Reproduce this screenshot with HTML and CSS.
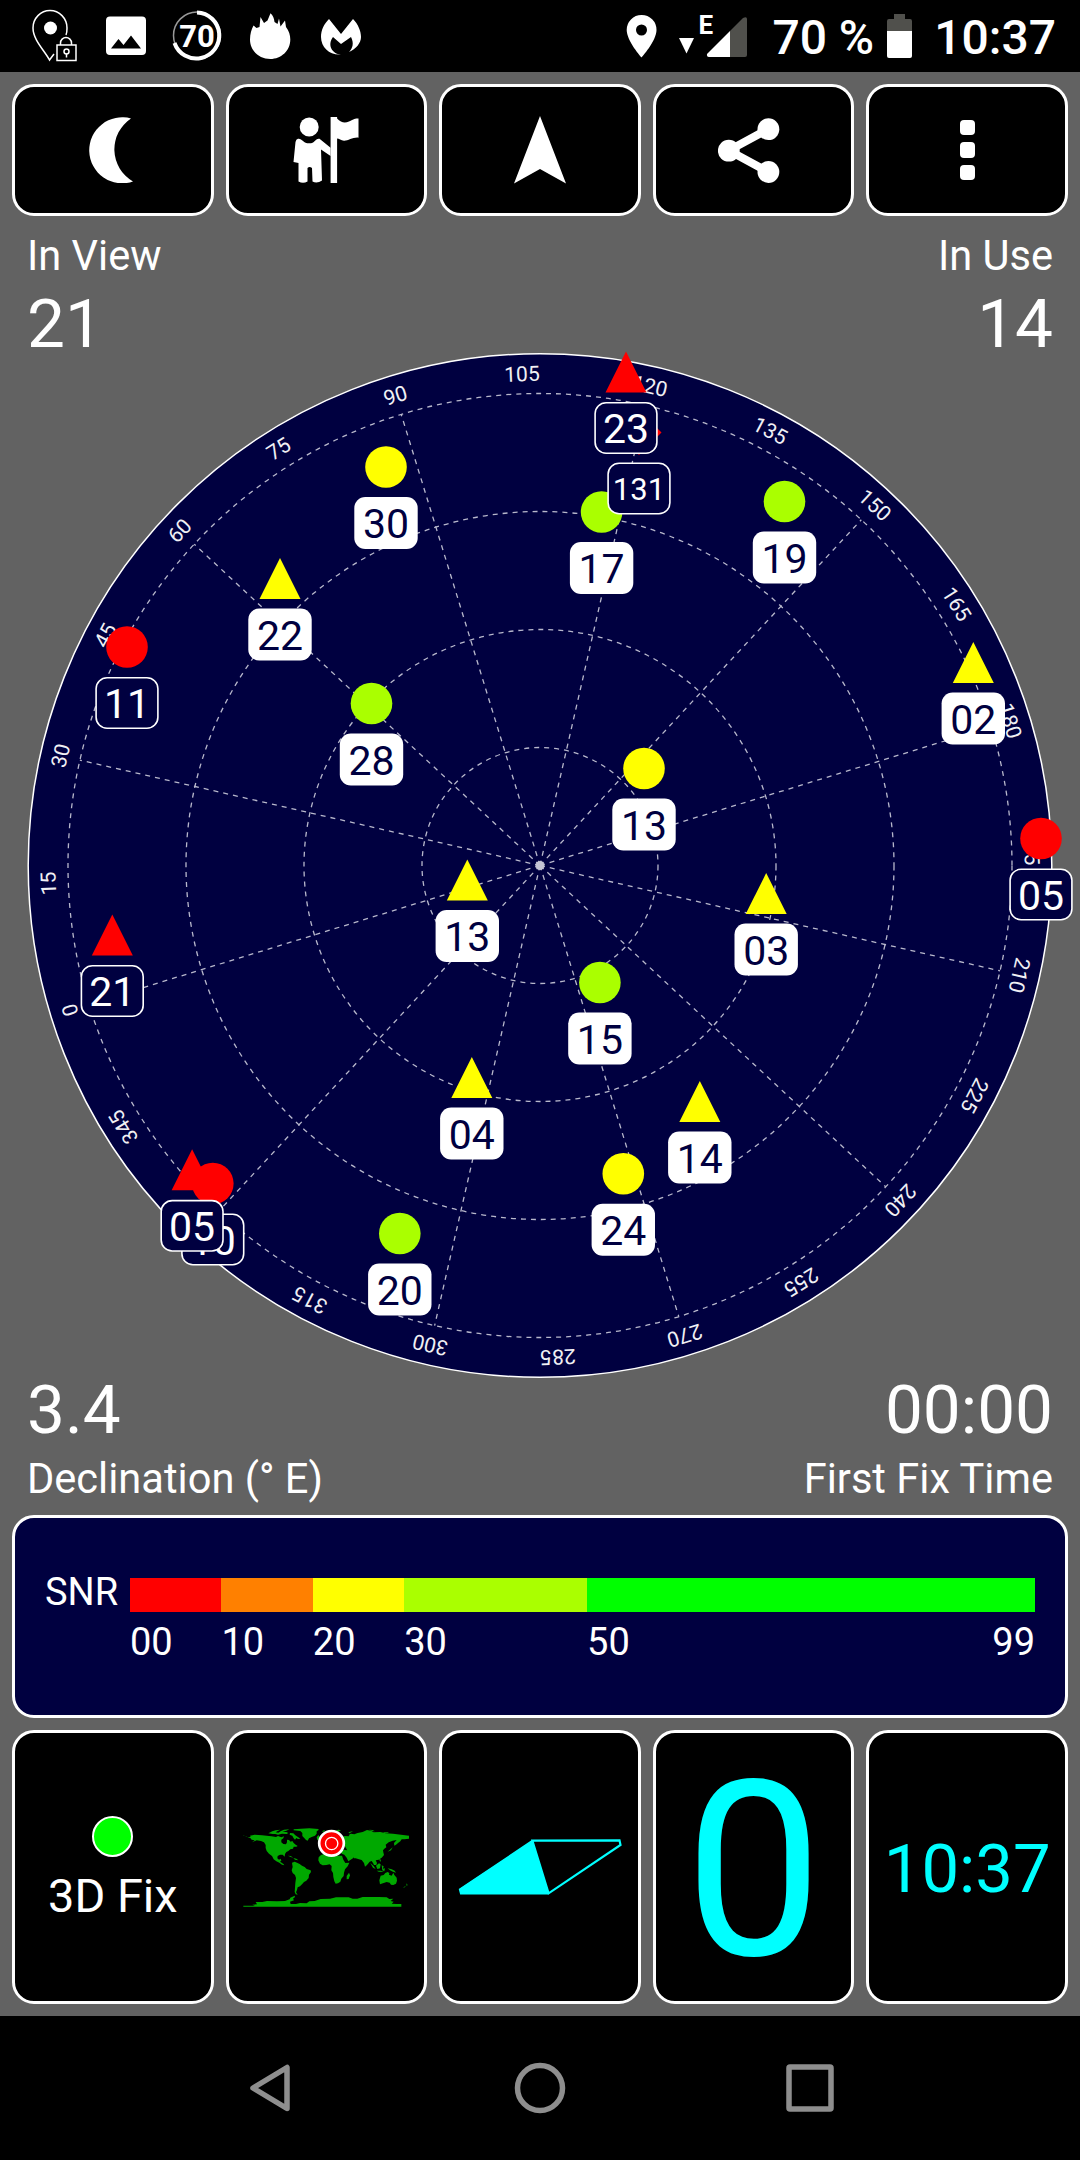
FILE: index.html
```
<!DOCTYPE html>
<html lang="en">
<head>
    <meta charset="UTF-8">
    <meta name="viewport" content="width=device-width, initial-scale=1.0">
    <title>GPS Status</title>
    <link rel="stylesheet" href="styles.css">
</head>
<body>
    <!-- Status bar -->
    <div class="status-bar">
        <div class="status-left">
            <svg class="status-icon" width="48" height="72" viewBox="31 0 48 72">
                <g fill="none" stroke="#fff" stroke-width="1.5">
                    <path d="M66 35C67 33 67 31 67 28A17 17.500 0 0 0 33 28C33 40 45 51 49.500 60L54 54"/>
                    <rect x="57" y="45" width="19" height="15.500"/>
                    <path d="M60.500 45v-2a5.500 5.500 0 0 1 11 0v2M66.500 53.500v4"/>
                    <circle cx="66.500" cy="51.500" r="2.500"/>
                </g>
                <circle cx="50.500" cy="28" r="6.500" fill="#fff"/>
            </svg>
            <svg class="status-icon" width="40" height="72" viewBox="106 0 40 72">
                <path fill="#fff" fill-rule="evenodd" d="M110 16.500h32a4 4 0 0 1 4 4V51a4 4 0 0 1-4 4h-32a4 4 0 0 1-4-4V20.500a4 4 0 0 1 4-4zM111 48.500h30L131 35.500l-7.500 9.500-5-6z"/>
            </svg>
            <svg class="status-icon" width="50" height="72" viewBox="173 0 50 72">
                <circle cx="198" cy="35.500" r="23.500" fill="none" stroke="#999" stroke-width="1.500"/>
                <path d="M198 12.500A23 23 0 1 1 175.500 43" fill="none" stroke="#fff" stroke-width="4"/>
                <text class="ring-text" x="198" y="46.500">70</text>
            </svg>
            <svg class="status-icon" width="42" height="72" viewBox="249 0 42 72">
                <path fill="#fff" d="M270.300 59C259 59 250 50.500 250 39.500C250 34 251.500 29 253.500 25.500L256.500 28L259.500 27L260.500 17L264 23L267.500 20.500L270.500 13.300C273 15.500 274 18 274.500 22L277.500 24L279 18.500L280.500 26.500L285 20.500L286 27C289 31 290.300 35 290.300 39.500C290.300 50.500 281.500 59 270.300 59z"/>
            </svg>
            <svg class="status-icon last" width="40" height="72" viewBox="322 0 40 72">
                <path fill="#fff" d="M330 19l12 15 12-15c5 5 8 12 8 18 0 6-5 12-12 15 4-4 5-9 2-15l-10 7-8-7c-6 8-1 17 8 17.500-11 1-20-7-20-17.500 0-7 3-13 8-18z"/>
            </svg>
        </div>
        <div class="status-right">
            <svg width="32" height="72" viewBox="626 0 32 72">
                <path fill="#fff" fill-rule="evenodd" d="M641.500 15A14.800 14.800 0 0 0 626.700 30C626.700 41 641.500 57.500 641.500 57.500S656.500 41 656.500 30A14.800 14.800 0 0 0 641.500 15zM641.500 24.500a5.500 5.500 0 1 1 0 11 5.500 5.500 0 0 1 0-11z"/>
            </svg>
            <svg class="signal" width="70" height="72" viewBox="678 0 70 72">
                <path d="M679 38h15l-7.500 15.500z" fill="#fff"/>
                <path d="M730 31l13-13q4-2 4 1v36q0 2-2 2h-15z" fill="#50504c"/>
                <path d="M730 31v26h-21q-2.500 0-2-3z" fill="#fff"/>
                <text class="network-text" x="698.500" y="33.500">E</text>
            </svg>
            <span class="battery-text">70 %</span>
            <svg class="battery" width="26" height="72" viewBox="887 0 26 72">
                <path d="M894 14h11v5h5q2 0 2 2v10h-25V21q0-2 2-2h5z" fill="#50504c"/>
                <path d="M887 31h25v25q0 2-2 2h-21q-2 0-2-2z" fill="#fff"/>
            </svg>
            <span class="clock">10:37</span>
        </div>
    </div>

    <div class="app">
        <!-- Toolbar -->
        <div class="toolbar">
            <div class="tool-btn">
                <svg width="66" height="66"><path d="M51 1.500A33 33 0 1 0 53 64.500A37 37 0 0 1 51 1.500z"/></svg>
            </div>
            <div class="tool-btn">
                <svg width="66" height="66">
                    <circle cx="16.200" cy="10" r="9.500"/>
                    <rect x="37.600" y="0" width="6.500" height="66"/>
                    <path d="M44 1.500C48 5 51 7 56 4.500S62 1.500 65.500 1.500V20.700C60 20 55 24 51 23.800 48 23.600 46 21.500 44 21.500z"/>
                    <path d="M5 21.700C9 21 10 26.300 16.200 26.300S22 21 26.500 21.700L37.600 30.700V39L28 32.500 29 63.500Q24 67 19.500 64.500L19 51Q16.500 49 14.500 51V64.500Q10 67 5.500 64.500V46L0.500 45 2.500 25Q3 22 5 21.700z"/>
                </svg>
            </div>
            <div class="tool-btn">
                <svg width="52" height="68"><path d="M26 0L52 67.500L26 53L0 67.500z"/></svg>
            </div>
            <div class="tool-btn">
                <svg class="share-icon" width="72" height="72">
                    <path d="M50.400 15L10.800 36.500L50.400 58" fill="none" stroke="#fff" stroke-width="8"/>
                    <circle cx="50.400" cy="15.200" r="10.900"/>
                    <circle cx="10.800" cy="36.700" r="10.900"/>
                    <circle cx="50.400" cy="58" r="10.900"/>
                </svg>
            </div>
            <div class="tool-btn">
                <div class="dots"><i></i><i></i><i></i></div>
            </div>
        </div>

        <!-- Sky view -->
        <div class="sky">
            <div class="readouts">
                <div class="readout-row">
                    <div>
                        <div class="label">In View</div>
                        <div class="value">21</div>
                    </div>
                    <div class="right">
                        <div class="label">In Use</div>
                        <div class="value">14</div>
                    </div>
                </div>
                <div class="readout-row">
                    <div>
                        <div class="value">3.4</div>
                        <div class="label">Declination (° E)</div>
                    </div>
                    <div class="right">
                        <div class="value">00:00</div>
                        <div class="label">First Fix Time</div>
                    </div>
                </div>
            </div>
            <svg class="radar" id="radar" viewBox="-540 -649.5 1080 1299">
                <circle class="disc" r="511.800"/>
                <g id="grid"></g>
                <circle class="center-dot" r="4.500"/>
                <g id="degrees"></g>
                <g id="satellites"></g>
            </svg>
        </div>

        <!-- Signal legend -->
        <div class="snr-panel">
            <div class="snr-title">SNR</div>
            <div class="snr-scale">
                <div class="snr-step red"><div class="bar"></div><span>00</span></div>
                <div class="snr-step orange"><div class="bar"></div><span>10</span></div>
                <div class="snr-step yellow"><div class="bar"></div><span>20</span></div>
                <div class="snr-step lime"><div class="bar"></div><span>30</span></div>
                <div class="snr-step green"><div class="bar"></div><span>50</span><span>99</span></div>
            </div>
        </div>

        <!-- Bottom cards -->
        <div class="cards">
            <div class="card fix-card">
                <div class="fix-dot"></div>
                <div class="fix-text">3D Fix</div>
            </div>
            <div class="card map-card">
                <svg width="167" height="81" viewBox="24 38 501 243">
                    <g fill="#00a800">
                        <!-- americas -->
                        <path d="M25 62h8l2 3h12l-2-4 14-3 22 2 28 3 14 2 6-3 10 4 8-3-2 6-6 4 0 8 6 5 8 1 3-6 0-8 6 1 5 5 5-2 4 6 6 5 6 4-4 2-8 0-2 6-8 2-6 5-6 3-4 6-1 8-6-6-8 0-7 4-1 7 5 4 5-3 2 6-4 3 6 4 5 4 2 3-7-2-8-6-9-4-8-6-5-10-9-7-7-8-3-9 0-9-5-8-9-4-13-2-14 6 8-6-9-2-4-5-7-2-8-4-10-1z"/>
                        <path d="M100 54l12-6 10-3 14-2-8 4-6 4 8 1 8-5 9-4 16-1-9 4-12 4 12 0 6 3-5 3-14-1-12 3-8-2-8 0z"/>
                        <path d="M165 53l10 1 6 6 9 6 6 4-7 1-5-3-4 5-4-4-4-8-8-3z"/>
                        <path d="M176 42l22-2 25-1 27 2 1 3-6 4 0 7-5 6-10 4-8 4-4 7-5-2-6-7-5-5 0-9-6-6-20-2z"/>
                        <path d="M159 121l8 1 8 5-8-2zM175 128l9 2 6 5-10-2z"/>
                        <path d="M171 142l8-3 7 3 8 4 7 5 8 4 6 6 12 4 1 5-6 8-1 10-7 8-7 4-6 7-6 6-7 3-2 8-3 7 5 7-6-1-3-7 1-13 1-14 2-15-3-9-7-6-3-8 3-10z"/>
                        <!-- africa and eurasia -->
                        <path d="M258 119l12-4 30 1 8 5 13 0 4 12 6 10 12-1-5 11-8 9-3 10-1 10-7 8-3 9-7 5-7 1-4-7-3-13-1-12-5-8 1-13-6-5-10 2-11 1-8-5-5-10 1-9z"/>
                        <path d="M317 69l12-7 12 1 3-6 4-2 10 2 10-4 15-3 13-6 12 2 8 5 20-1 16 4 22 1 24 3 24 3 0 9-14 2-8 0-4 6-6 4-7 6-5 3-1-8 8-9-12 2-12 5-9 7 2 8-6 4-4 5 1 6 2 8-7 8-9 6-9 2 4 8-2 6-7 0-3-6-4-6-6 2-8 10-6 5-3-11-7-9-8-2-10-3-5 0-3-6-8-1z"/>
                        <path d="M317 108l9-5 11 2 3-9 8 1 0 12 4 7 7 4-4 8-8 5-7 5-5-11-7-9-8-3z"/>
                        <path d="M342 172l3 8-4 11-6 1 0-10z"/>
                        <path d="M245 66l5-7 3 4-2 10-4 2zM260 48l10-4-3 5zM303 45l8-2 7 2-8 4zM340 51l14-4-10 7z"/>
                        <path d="M402 43l10 1 8 4-8-1zM444 50l14 0 4 2-14 0z"/>
                        <!-- islands and oceania -->
                        <path d="M406 143l10 9 6 9-8-4zM423 151l9-7 5 3-2 12-8 2zM440 150l6 3-2 7 6-1-2 9-6-3zM425 166l12 0 10 4-16-1zM458 159l12 3 9 4 4 6-9-3-9-4zM432 131l6 2-2 7zM468 100l5-4-5 9-10 4z"/>
                        <path d="M437 181l9-2 5-6 7-3 5 3-1 5 8 3 5-9 3 7 7 8 1 9-3 9-8 4-7-1-4-6-9-2-9 3-11 4-2-12z"/>
                        <path d="M514 204l4 5-3 3zM513 211l-4 5-5 2 4-4z"/>
                        <!-- antarctica -->
                        <path d="M25 271h35l-8-3 14-1-4-7 20 0 14-3 30 1 24-1 14-5 2-5 13-6 1 4-6 5 3 5-12 4 2 7 16 0 12-3 20 1 8-6 16-1 18-6 28-1 18-4 38 0 12 4 14 0 16-5 48 0 24 1 8 5 12-1-8 7 9 2-6 6 14 1h15v8H25z"/>
                    </g>
                    <circle cx="289.500" cy="84" r="37" fill="#f00" stroke="#fff" stroke-width="8"/>
                    <circle cx="290" cy="84.500" r="18.500" fill="#f00" stroke="#fff" stroke-width="4"/>
                </svg>
            </div>
            <div class="card">
                <svg width="166" height="60" viewBox="457 1837 166 60">
                    <path d="M532.400 1840.500L459.500 1889L461 1894L548.600 1893.300z" fill="#0ff"/>
                    <path d="M532.400 1840.700L548.600 1893.300L620.500 1845L619.500 1840.300zM532.400 1841L460 1889.500L461 1893.500L548.600 1893.300" fill="none" stroke="#0ff" stroke-width="2.200"/>
                </svg>
            </div>
            <div class="card speed">0</div>
            <div class="card time">10:37</div>
        </div>
    </div>

    <!-- Navigation bar -->
    <div class="nav-bar">
        <svg width="48" height="52"><path d="M7 26L41 5.500V46.500z"/></svg>
        <svg width="56" height="56"><circle cx="28" cy="28" r="22.500"/></svg>
        <svg width="48" height="48"><rect x="3" y="3" width="42" height="42" rx="1"/></svg>
    </div>

    <script src="script.js"></script>
</body>
</html>
```
FILE: styles.css
```
* {
    box-sizing: border-box;
}
body {
    width: 1080px;
    height: 2160px;
    margin: 0;
    background-color: #000;
    color: #fff;
    font-family: Roboto, "Liberation Sans", sans-serif;
    overflow: hidden;
}
svg {
    display: block;
}

/* Status bar */
.status-bar {
    height: 72px;
    display: flex;
    justify-content: space-between;
    padding: 0 24px 0 31px;
    background-color: #000;
}
.status-left,
.status-right {
    display: flex;
}
.status-left {
    gap: 26.5px;
}
.status-icon.last {
    margin-left: 4px;
}
.ring-text {
    font-size: 31px;
    font-weight: 700;
    fill: #fff;
    text-anchor: middle;
}
.network-text {
    font-size: 26px;
    font-weight: 700;
    fill: #fff;
}
.signal {
    margin-left: 20px;
}
.battery {
    margin: 0 21px 0 13px;
}
.battery-text,
.clock {
    font-size: 48px;
    font-weight: 500;
    line-height: 75px;
}
.battery-text {
    margin-left: 24px;
}

/* App area */
.app {
    height: 1944px;
    background-color: #626262;
    display: flex;
    flex-direction: column;
}
.toolbar,
.cards {
    display: flex;
    gap: 12px;
    padding: 12px;
}
.toolbar {
    padding-bottom: 0;
}
.tool-btn,
.card {
    flex: 1;
    display: flex;
    align-items: center;
    justify-content: center;
    background-color: #000;
    border: 3px solid #fff;
    border-radius: 22px;
}
.tool-btn {
    height: 132px;
    fill: #fff;
}
.dots {
    display: flex;
    flex-direction: column;
    gap: 7px;
}
.dots i {
    width: 15px;
    height: 15.5px;
    border-radius: 4px;
    background-color: #fff;
}

/* Sky view */
.sky {
    height: 1299px;
    display: grid;
}
.readouts,
.radar {
    grid-area: 1 / 1;
}
.readouts {
    display: flex;
    flex-direction: column;
    justify-content: space-between;
    padding: 18px 27px 15px;
}
.readout-row {
    display: flex;
    justify-content: space-between;
}
.right {
    text-align: right;
}
.label {
    font-size: 41.6px;
    line-height: 43px;
}
.value {
    font-size: 67.5px;
    line-height: 80px;
    margin: 7px 0;
}
.radar {
    width: 1080px;
    height: 1299px;
}
.disc {
    fill: #000040;
    stroke: #fff;
    stroke-width: 1.5;
}
.ring,
.ray {
    fill: none;
    stroke: #b8b8cc;
    stroke-width: 1.3;
    stroke-dasharray: 5 5;
}
.center-dot {
    fill: #c4c4d4;
}
.degree {
    font-size: 21px;
    fill: #f0f0f4;
    text-anchor: middle;
}
.red { fill: #f00; }
.yellow { fill: #ff0; }
.lime { fill: #af0; }
.tag {
    fill: #fff;
}
.tag-text {
    font-size: 41px;
    fill: #000040;
    text-anchor: middle;
}
.tag.unused {
    fill: #000040;
    stroke: #fff;
    stroke-width: 1.6;
}
.tag-text.unused {
    fill: #fff;
}
.tag-text.small {
    font-size: 31px;
}

/* Signal legend */
.snr-panel {
    height: 203px;
    margin: 0 12px;
    padding: 60px 30px 0 30px;
    display: flex;
    background-color: #000040;
    border: 3px solid #fff;
    border-radius: 22px;
}
.snr-title {
    width: 85px;
    font-size: 38px;
    line-height: 29px;
}
.snr-scale {
    flex: 1;
    display: flex;
    font-size: 38px;
    line-height: 44px;
}
.snr-step {
    flex: 10 0 0;
    display: flex;
    flex-wrap: wrap;
    justify-content: space-between;
    align-content: flex-start;
}
.snr-step .bar {
    width: 100%;
    height: 34px;
    margin-bottom: 8px;
}
.snr-step.lime {
    flex-grow: 20;
}
.snr-step.green {
    flex-grow: 49;
}
.red .bar { background-color: #f00; }
.orange .bar { background-color: #ff8000; }
.yellow .bar { background-color: #ff0; }
.lime .bar { background-color: #af0; }
.green .bar { background-color: #0f0; }

/* Bottom cards */
.card {
    height: 274px;
}
.fix-card {
    flex-direction: column;
    padding-top: 5px;
}
.fix-dot {
    width: 41px;
    height: 41px;
    border: 2px solid #fff;
    border-radius: 50%;
    background-color: #0f0;
}
.fix-text {
    font-size: 47px;
    line-height: 56px;
    margin: 11px 0 0;
}
.map-card {
    padding-top: 3px;
}
.speed {
    color: #0ff;
    font-size: 245px;
    line-height: 250px;
    padding-top: 9px;
}
.time {
    color: #0ff;
    font-size: 67px;
    padding-top: 3px;
}

/* Navigation bar */
.nav-bar {
    height: 144px;
    display: flex;
    align-items: center;
    justify-content: center;
    gap: 218px;
    fill: none;
    stroke: #8e8e8e;
    stroke-width: 5.5;
    stroke-linejoin: round;
}
```
FILE: script.js
```
const svgNS = 'http://www.w3.org/2000/svg';

// heading offset of the compass rose, in degrees
const heading = 107.1;

// positions are measured from the zenith in pixels, drawn in this order
const satellites = [
    { id: '17', x: 61.6, y: -353.5, color: 'lime', used: true, shape: 'circle' },
    { id: '131', x: 99, y: -433, color: 'red', used: false, shape: 'diamond' },
    { id: '23', x: 86, y: -493.5, color: 'red', used: false, shape: 'triangle' },
    { id: '19', x: 244.5, y: -364, color: 'lime', used: true, shape: 'circle' },
    { id: '30', x: -154, y: -398.5, color: 'yellow', used: true, shape: 'circle' },
    { id: '22', x: -260, y: -287, color: 'yellow', used: true, shape: 'triangle' },
    { id: '11', x: -413, y: -218.5, color: 'red', used: false, shape: 'circle' },
    { id: '28', x: -168.5, y: -162, color: 'lime', used: true, shape: 'circle' },
    { id: '02', x: 433.3, y: -203, color: 'yellow', used: true, shape: 'triangle' },
    { id: '13', x: 104, y: -97, color: 'yellow', used: true, shape: 'circle' },
    { id: '05', x: 501, y: -27, color: 'red', used: false, shape: 'circle' },
    { id: '13', x: -72.7, y: 14.5, color: 'yellow', used: true, shape: 'triangle' },
    { id: '03', x: 226.2, y: 28, color: 'yellow', used: true, shape: 'triangle' },
    { id: '21', x: -427.7, y: 69.5, color: 'red', used: false, shape: 'triangle' },
    { id: '15', x: 59.9, y: 117, color: 'lime', used: true, shape: 'circle' },
    { id: '04', x: -68.2, y: 212, color: 'yellow', used: true, shape: 'triangle' },
    { id: '14', x: 159.8, y: 236, color: 'yellow', used: true, shape: 'triangle' },
    { id: '24', x: 83.3, y: 308.3, color: 'yellow', used: true, shape: 'circle' },
    { id: '20', x: -140.2, y: 368, color: 'lime', used: true, shape: 'circle' },
    { id: '10', x: -327.2, y: 318, color: 'red', used: false, shape: 'circle' },
    { id: '05', x: -347.9, y: 304.3, color: 'red', used: false, shape: 'triangle' }
];

const shapes = {
    triangle: 'M0 -20.500L20.500 20.500H-20.500z',
    diamond: 'M0 -22.500L22.500 0L0 22.500L-22.500 0z'
};

function add(parent, name, attrs, text) {
    const el = document.createElementNS(svgNS, name);
    for (const key in attrs) {
        el.setAttribute(key, attrs[key]);
    }
    if (text) {
        el.textContent = text;
    }
    parent.appendChild(el);
    return el;
}

function drawGrid() {
    const grid = document.getElementById('grid');
    const degrees = document.getElementById('degrees');

    [118, 236, 354, 472].forEach(r => add(grid, 'circle', { class: 'ring', r: r }));

    for (let a = 0; a < 360; a += 15) {
        const turn = `rotate(${(a - heading).toFixed(1)})`;
        if (a % 30 === 0) {
            add(grid, 'line', { class: 'ray', y1: 0, y2: -472, transform: turn });
        }
        add(degrees, 'text', { class: 'degree', y: -484.5, transform: turn }, String(a));
    }
}

function drawSatellites() {
    const layer = document.getElementById('satellites');

    satellites.forEach(sat => {
        const g = add(layer, 'g', { transform: `translate(${sat.x} ${sat.y})` });
        const small = sat.id.length > 2;

        if (sat.shape === 'circle') {
            add(g, 'circle', { class: sat.color, r: 20.8 });
        } else {
            add(g, 'path', { class: sat.color, d: shapes[sat.shape] });
        }

        if (sat.used) {
            add(g, 'rect', { class: 'tag', x: -31.7, y: 30, width: 63.4, height: 52, rx: 11 });
        } else {
            add(g, 'rect', { class: 'tag unused', x: -30.9, y: 30.8, width: 61.8, height: 50.4, rx: 11 });
        }
        add(g, 'text', {
            class: 'tag-text' + (sat.used ? '' : ' unused') + (small ? ' small' : ''),
            y: small ? 67.5 : 71
        }, sat.id);
    });
}

drawGrid();
drawSatellites();
```
